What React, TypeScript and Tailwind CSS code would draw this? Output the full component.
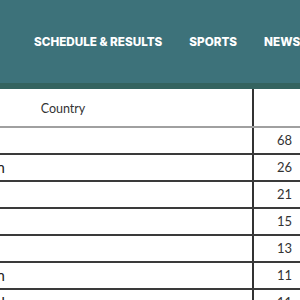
import React from 'react';

const rows = [
  { name: 'United States', gold: 68 },
  { name: 'Great Britain', gold: 26 },
  { name: 'Netherlands', gold: 21 },
  { name: 'Australia', gold: 15 },
  { name: 'Germany', gold: 13 },
  { name: 'Kazakhstan', gold: 11 },
  { name: 'Poland', gold: 11 },
];

const trailing = new Set(['Great Britain', 'Kazakhstan', 'Poland']);

export default function App() {
  return (
    <div className="w-[300px] h-[300px] overflow-hidden bg-white" style={{ fontFamily: 'Lato, "Open Sans", sans-serif' }}>
      <header className="bg-[#3d727a] border-b-[6px] border-[#34635f]">
        <nav className="h-[83px] flex items-center gap-[27px] pl-[34px] pt-[2px] whitespace-nowrap">
          {['SCHEDULE & RESULTS', 'SPORTS', 'NEWS'].map((item) => (
            <a key={item} className="text-white font-extrabold text-[11.7px]" style={{ fontFamily: 'Inter, sans-serif' }}>
              {item}
            </a>
          ))}
        </nav>
      </header>

      <div className="ml-[-122px] w-[430px] text-[#333]">
        <div className="flex h-[39px] border-b-2 border-[#a0a0a0]">
          <div className="w-[376px] border-r-2 border-[#333] flex items-center justify-center pr-[4px] pt-[3px] text-[12.5px]">Country</div>
          <div className="w-[46px]"></div>
        </div>
        {rows.map((r) => (
          <div key={r.name} className="flex h-[27px] border-b-2 border-[#3a3a3a]">
            <div className="w-[376px] border-r-2 border-[#333] flex items-center text-[15px] text-[#222]">
              <span className={trailing.has(r.name) ? 'w-[127px] text-right' : 'w-[110px] text-right'}>{r.name}</span>
            </div>
            <div className="w-[46px] flex items-center justify-end pr-[8px] text-[13px] pt-[1px]">{r.gold}</div>
          </div>
        ))}
      </div>
      <div className="h-[20px] bg-[#2f5a53] -mt-[12px] relative"></div>
    </div>
  );
}
